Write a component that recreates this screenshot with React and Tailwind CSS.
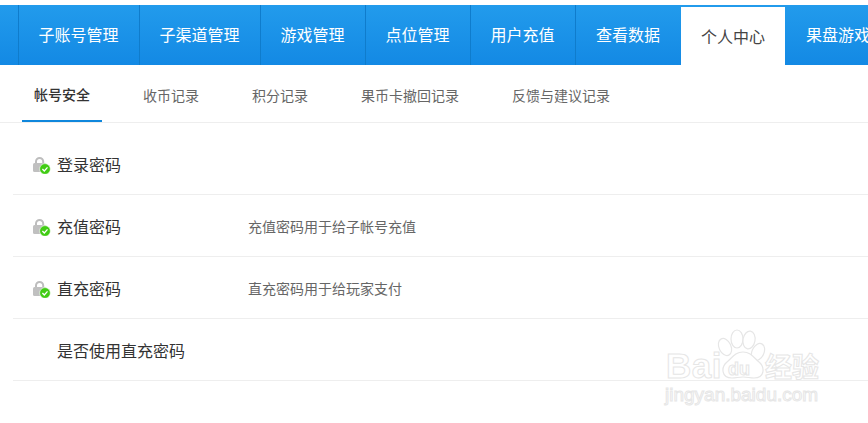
const FONT = "font-['Noto_Sans_CJK_SC','Noto_Sans',sans-serif]";

const tabs = [
  { label: "子账号管理", w: "w-[121px]" },
  { label: "子渠道管理", w: "w-[121px]" },
  { label: "游戏管理", w: "w-[105px]" },
  { label: "点位管理", w: "w-[105px]" },
  { label: "用户充值", w: "w-[105px]" },
  { label: "查看数据", w: "w-[106px]" },
];

function Lock() {
  return (
    <svg width="20" height="20" viewBox="0 0 20 20" className="shrink-0">
      <path d="M4 10V7.5a3.6 3.6 0 0 1 7.2 0V10" fill="none" stroke="#bdbdbd" strokeWidth="2" />
      <rect x="1" y="9" width="13" height="9" rx="1.5" fill="#c0c0c0" />
      <circle cx="13" cy="15" r="5.4" fill="#41cc14" stroke="#fff" strokeWidth="0.6" />
      <path d="M10.4 15l1.9 2 3.2-3.6" fill="none" stroke="#fff" strokeWidth="1.3" />
    </svg>
  );
}

function Row({ title, desc, icon = true }) {
  return (
    <div className="flex h-[62px] items-center border-b border-[#eeeeee]">
      <div className="w-[19px] ml-[19px] mr-[6px] flex items-center">{icon && <Lock />}</div>
      <div className="w-[191px] text-[16px] text-[#333333]">{title}</div>
      {desc && <div className="pt-[2px] text-[14px] text-[#666666]">{desc}</div>}
    </div>
  );
}

function Watermark() {
  const stroke = "text-transparent [-webkit-text-stroke:1px_#e6e6e6]";
  return (
    <div className="absolute left-[665px] top-[328px] w-[180px] h-[80px] font-['Liberation_Sans',sans-serif] select-none">
      <span className={`absolute left-[1px] top-[20px] text-[35px] leading-[36px] font-bold tracking-[0.5px] ${stroke}`}>Bai</span>
      <svg width="62" height="66" viewBox="0 0 62 66" className="absolute left-[51px] top-0">
        <g fill="#fff" stroke="#e6e6e6" strokeWidth="1.2">
          <ellipse cx="9" cy="19" rx="6" ry="9" transform="rotate(-25 9 19)" />
          <ellipse cx="21" cy="11" rx="6" ry="9" />
          <ellipse cx="33" cy="12" rx="6" ry="9" transform="rotate(10 33 12)" />
          <ellipse cx="42" cy="24" rx="6" ry="9" transform="rotate(25 42 24)" />
          <path d="M27 24c-8 0-11 6-16 10-6 5-6 16 5 16 4 0 7-1 11-1s7 1 11 1c11 0 11-11 5-16-5-4-8-10-16-10z" />
        </g>
      </svg>
      <span className={`absolute left-[63px] top-[31px] text-[18px] leading-[20px] font-bold ${stroke}`}>du</span>
      <span className={`absolute left-[100px] top-[22px] text-[27px] leading-[32px] font-bold font-['Noto_Sans_CJK_SC',sans-serif] ${stroke}`}>经验</span>
      <span className={`absolute left-0 top-[56px] text-[19px] leading-[22px] ${stroke}`}>jingyan.baidu.com</span>
    </div>
  );
}

export default function App() {
  return (
    <div className={`relative w-[868px] h-[423px] overflow-hidden bg-white ${FONT}`}>
      <nav className="mt-[5px] flex h-[60px] pl-[18px] bg-gradient-to-b from-[#229bec] to-[#1389e4] whitespace-nowrap">
        {tabs.map((t) => (
          <div key={t.label} className={`${t.w} shrink-0 flex items-center justify-center border-l border-[#0f7ccc] pr-[1px] pb-[2px] text-[16px] text-white`}>
            {t.label}
          </div>
        ))}
        <div className="mt-[2px] w-[104px] shrink-0 flex items-center justify-center bg-white text-[16px] text-[#444444]">个人中心</div>
        <div className="shrink-0 pl-[21px] pb-[2px] flex items-center text-[16px] text-white">果盘游戏</div>
      </nav>
      <div className="flex h-[58px] pl-[22px] border-b border-[#eeeeee] text-[14px] text-[#666666]">
        <div className="w-[80px] flex items-center justify-center border-b-2 border-[#0f87dc] h-[57px] pt-[4px] font-medium text-[#333333]">帐号安全</div>
        <div className="ml-[41px] flex items-center h-[57px] pt-[4px]">收币记录</div>
        <div className="ml-[53px] flex items-center h-[57px] pt-[4px]">积分记录</div>
        <div className="ml-[53px] flex items-center h-[57px] pt-[4px]">果币卡撤回记录</div>
        <div className="ml-[53px] flex items-center h-[57px] pt-[4px]">反馈与建议记录</div>
      </div>
      <div className="ml-[13px] mt-[10px]">
        <Row title="登录密码" />
        <Row title="充值密码" desc="充值密码用于给子帐号充值" />
        <Row title="直充密码" desc="直充密码用于给玩家支付" />
        <Row title="是否使用直充密码" icon={false} />
      </div>
      <Watermark />
    </div>
  );
}
